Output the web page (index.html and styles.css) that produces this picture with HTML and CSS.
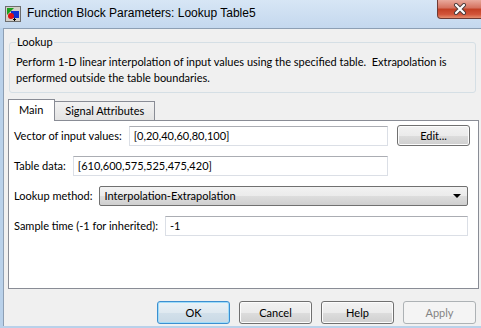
FILE: index.html
```html
<!DOCTYPE html>
<html lang="en">
<head>
    <meta charset="UTF-8">
    <meta name="viewport" content="width=device-width, initial-scale=1.0">
    <title>Function Block Parameters: Lookup Table5</title>
    <link rel="stylesheet" href="styles.css">
</head>
<body>
    <div class="window">
        <div class="titlebar">
            <svg class="app-icon" width="16" height="16" viewBox="0 0 16 16">
                <rect x="0.5" y="0.5" width="15" height="15" fill="#d4d0c8" stroke="#6d6d6d"/>
                <rect x="6" y="5" width="8" height="7" fill="#1030d0"/>
                <polygon points="2,2 9,2 2,9" fill="#1aa01a"/>
                <circle cx="6" cy="10" r="3" fill="#e01010"/>
                <rect x="9" y="12" width="1" height="3" fill="#000"/>
                <rect x="8" y="13" width="3" height="1" fill="#000"/>
            </svg>
            <span class="title">Function Block Parameters: Lookup Table5</span>
            <div class="close">
                <svg width="14" height="12" viewBox="0 0 14 12">
                    <path d="M3 2 L11 10 M11 2 L3 10" stroke="#4a3a3a" stroke-width="4" stroke-linecap="round"/>
                    <path d="M3 2 L11 10 M11 2 L3 10" stroke="#ffffff" stroke-width="2.2" stroke-linecap="round"/>
                </svg>
            </div>
        </div>

        <div class="client">
            <fieldset class="group">
                <legend>Lookup</legend>
                <p>Perform 1-D linear interpolation of input values using the specified table.&nbsp; Extrapolation is<br>performed outside the table boundaries.</p>
            </fieldset>

            <div class="tabs">
                <div class="tab tab-active">Main</div>
                <div class="tab">Signal Attributes</div>
            </div>

            <div class="panel">
                <div class="row row-wide">
                    <label for="input_values">Vector of input values:</label>
                    <input type="text" id="input_values" value="[0,20,40,60,80,100]">
                    <button class="btn btn-edit">Edit...</button>
                </div>
                <div class="row row-wide">
                    <label for="table_data">Table data:</label>
                    <input type="text" id="table_data" class="field-short" value="[610,600,575,525,475,420]">
                </div>
                <div class="row">
                    <label>Lookup method:</label>
                    <div class="select">
                        <span>Interpolation-Extrapolation</span>
                        <span class="caret"></span>
                    </div>
                </div>
                <div class="row">
                    <label for="sample_time">Sample time (-1 for inherited):</label>
                    <input type="text" id="sample_time" value="-1">
                </div>
            </div>

            <div class="actions">
                <button class="btn btn-default">OK</button>
                <button class="btn">Cancel</button>
                <button class="btn">Help</button>
                <button class="btn" disabled>Apply</button>
            </div>
        </div>
    </div>
</body>
</html>
```

FILE: styles.css
```css
body {
    margin: 0;
    font-family: Lato, "Liberation Sans", sans-serif;
    font-size: 11px;
    color: #000;
}

.window {
    width: 481px;
    height: 328px;
    background: #b9d1ea; /* aero frame */
    display: flex;
    flex-direction: column;
    overflow: hidden;
}

.titlebar {
    height: 28px;
    display: flex;
    align-items: flex-start;
    background: linear-gradient(#d7e6f5, #c4d8ee);
}

.app-icon {
    margin: 6px 6px 0 5px;
}

.title {
    font-family: "Liberation Sans", sans-serif;
    font-size: 12px;
    line-height: 28px;
    margin-top: -1px;
    flex: 1;
}

.close {
    width: 46px;
    height: 19px;
    margin-right: -2px;
    border: 1px solid #6e3a33;
    border-top: none;
    border-radius: 0 0 0 4px;
    background: linear-gradient(#e9a99c, #d4705d 45%, #c23f24 50%, #d2553a 80%, #e58e6f);
    display: flex;
    align-items: center;
    justify-content: center;
    box-sizing: border-box;
}

.client {
    flex: 1;
    margin: 0 0 2px 3px;
    background: #f0f0f0;
    border-top: 1px solid #8d9fb4;
    border-left: 1px solid #8d9fb4;
    display: flex;
    flex-direction: column;
}

.group {
    margin: 6px 5px 0 5px;
    padding: 5px 6px 6px;
    border: 1px solid #d5dfe5;
    border-radius: 3px;
}

.group legend {
    padding: 0 1px;
    line-height: 14px;
}

.group p {
    margin: 0;
    line-height: 16px;
}

.tabs {
    display: flex;
    align-items: flex-end;
    margin: 6px 0 0 4px;
    position: relative;
    z-index: 1;
}

.tab {
    height: 18px;
    line-height: 18px;
    padding: 0 10px;
    border: 1px solid #898c95;
    border-bottom: none;
    border-left: none;
    background: linear-gradient(#f2f2f2, #e3e3e3);
}

.tab-active {
    height: 21px;
    line-height: 20px;
    padding: 0 11px 0 10px;
    border-left: 1px solid #898c95;
    background: #fff;
    margin-bottom: -1px;
}

.panel {
    height: 163px;
    margin: 0 2px 0 4px;
    border: 1px solid #898c95;
    background: #fff;
    display: flex;
    flex-direction: column;
    gap: 9px;
    padding: 4px 10px 0 5px;
}

.row {
    height: 21px;
    display: flex;
    align-items: center;
    gap: 7px;
}

.row-wide {
    margin-right: -2px;
}

.row input {
    flex: 1;
    min-width: 0;
    height: 20px;
    box-sizing: border-box;
    padding: 0 4px;
    border: 1px solid #dbdfe6;
    border-top-color: #abadb3;
    font: inherit;
}

.row .field-short {
    margin-right: 82px;
}

.select {
    flex: 1;
    height: 20px;
    box-sizing: border-box;
    padding: 0 4px;
    border: 1px solid #707070;
    border-radius: 2px;
    background: linear-gradient(#f2f2f2, #ebebeb 50%, #dddddd 51%, #cfcfcf);
    display: flex;
    align-items: center;
    justify-content: space-between;
}

.caret {
    width: 0;
    height: 0;
    margin-right: 2px;
    border-left: 4px solid transparent;
    border-right: 4px solid transparent;
    border-top: 4px solid #000;
}

.btn {
    width: 73px;
    height: 23px;
    padding: 0;
    border: 1px solid #707070;
    border-radius: 3px;
    background: linear-gradient(#f2f2f2, #ebebeb 50%, #dddddd 51%, #cfcfcf);
    box-shadow: inset 0 0 0 1px #fcfcfc;
    font: inherit;
    color: #000;
}

.btn-edit {
    height: 21px;
    margin-left: 2px;
}

.btn-default {
    border-color: #3c8fd0;
    box-shadow: inset 0 0 0 1px #9fdcf9;
    background: linear-gradient(#eaf2f7, #dfe9f0 50%, #d2e0ea 51%, #c9d9e5);
}

.btn:disabled {
    border-color: #adb2b5;
    background: #f4f4f4;
    box-shadow: none;
    color: #838383;
}

.actions {
    display: flex;
    justify-content: flex-end;
    gap: 9px;
    margin-top: 12px;
    padding-right: 5px;
}
```
